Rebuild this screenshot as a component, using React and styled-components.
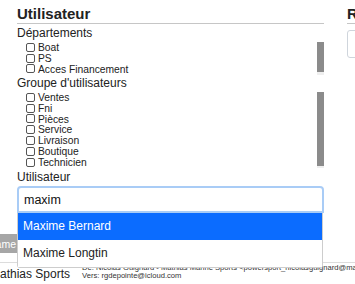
import React from "react";
import styled, { createGlobalStyle } from "styled-components";

const GlobalStyle = createGlobalStyle`
  html, body {
    margin: 0;
    overflow: hidden;
    background: #fff;
  }
  body {
    font-family: "Liberation Sans", Helvetica, Arial, sans-serif;
    color: #222;
  }
`;

const Page = styled.div`
  position: relative;
  width: 355px;
  height: 284px;
  overflow: hidden;
`;

const Columns = styled.div`
  display: grid;
  grid-template-columns: 307px 220px;
  column-gap: 23px;
  padding-left: 17px;
`;

const Column = styled.section`
  display: flex;
  flex-direction: column;
`;

const Heading = styled.h2`
  margin: 0;
  padding-top: 5px;
  font-size: 15px;
  line-height: 18px;
  font-weight: bold;
  color: #222;
  border-bottom: 1px solid #c6c6c6;
  white-space: nowrap;
`;

const Label = styled.div`
  margin-top: ${(p) => p.$gap || 2}px;
  font-size: 12px;
  line-height: 14px;
  white-space: nowrap;
`;

const ScrollBox = styled.div`
  display: flex;
  justify-content: space-between;
  margin-top: 2px;
  height: ${(p) => p.$height}px;
`;

const Items = styled.div`
  display: flex;
  flex-direction: column;
`;

const Item = styled.label`
  display: flex;
  align-items: center;
  gap: 3px;
  height: 10.8px;
  padding-left: 9px;
  font-size: 10.3px;
  line-height: 11px;
  white-space: nowrap;
`;

const Box = styled.span`
  width: 7px;
  height: 7px;
  border: 1px solid #555;
  border-radius: 2px;
  background: #fff;
`;

const Track = styled.div`
  width: 7px;
  background: #efefef;
  display: flex;
  flex-direction: column;
`;

const Thumb = styled.div`
  height: ${(p) => p.$size}px;
  background: #8b8b8b;
`;

const InputWrap = styled.div`
  position: relative;
  margin-top: 2px;
  z-index: 2;
`;

const Input = styled.input`
  display: block;
  box-sizing: border-box;
  width: 100%;
  height: 27px;
  margin: 0;
  padding: 0 5px;
  border: 2px solid #a9ccf6;
  border-radius: 4px 4px 0 0;
  font-family: inherit;
  font-size: 12.5px;
  color: #111;
  outline: none;
`;

const Dropdown = styled.ul`
  position: absolute;
  top: 100%;
  left: 0;
  right: 1px;
  margin: 0;
  padding: 0;
  list-style: none;
  background: #fff;
  border: 1px solid #cdcdcd;
  border-top: none;
  border-radius: 0 0 3px 3px;
`;

const Option = styled.li`
  height: 27px;
  line-height: 27px;
  padding-left: 5px;
  font-size: 12px;
  background: ${(p) => (p.$active ? "#0b6cff" : "#fff")};
  color: ${(p) => (p.$active ? "#fff" : "#222")};
`;

const SearchBox = styled.div`
  margin-top: 6px;
  height: 28px;
  box-sizing: border-box;
  border: 1px solid #cfd5dc;
  border-radius: 3px;
`;

const Toolbar = styled.div`
  display: flex;
  margin-top: 21px;
`;

const Button = styled.button`
  height: 19px;
  margin: 0 0 0 -13px;
  padding: 0 1px;
  border: none;
  background: #a6a6a6;
  color: #fff;
  font-family: inherit;
  font-size: 10.5px;
`;

const Footer = styled.div`
  display: flex;
  align-items: flex-start;
  margin-top: 9px;
  border-top: 1px solid #dcdcdc;
`;

const Sender = styled.div`
  margin: 4px 0 0 -10px;
  font-size: 12px;
  line-height: 14px;
  white-space: nowrap;
`;

const Meta = styled.div`
  margin-left: 12px;
  padding-top: 1px;
  font-size: 7.6px;
  line-height: 8px;
  color: #333;
  white-space: nowrap;
`;

const departements = ["Boat", "PS", "Acces Financement"];
const groupes = ["Ventes", "Fni", "Pièces", "Service", "Livraison", "Boutique", "Technicien"];

function CheckList({ items, height, thumb }) {
  return (
    <ScrollBox $height={height}>
      <Items>
        {items.map((name) => (
          <Item key={name}>
            <Box />
            {name}
          </Item>
        ))}
      </Items>
      <Track>
        <Thumb $size={thumb} />
      </Track>
    </ScrollBox>
  );
}

export default function App() {
  return (
    <Page>
      <GlobalStyle />
      <Columns>
        <Column>
          <Heading>Utilisateur</Heading>
          <Label>Départements</Label>
          <CheckList items={departements} height={33} thumb={30} />
          <Label $gap={1}>Groupe d'utilisateurs</Label>
          <CheckList items={groupes} height={76} thumb={74} />
          <Label>Utilisateur</Label>
          <InputWrap>
            <Input defaultValue="maxim" readOnly />
            <Dropdown>
              <Option $active>Maxime Bernard</Option>
              <Option>Maxime Longtin</Option>
            </Dropdown>
          </InputWrap>
        </Column>
        <Column>
          <Heading>Rôles</Heading>
          <SearchBox />
        </Column>
      </Columns>
      <Toolbar>
        <Button>Name</Button>
      </Toolbar>
      <Footer>
        <Sender>Mathias Sports</Sender>
        <Meta>
          <div>De: Nicolas Guignard - Mathias Marine Sports &lt;powersport_nicolasguignard@mathiassports.com&gt;</div>
          <div>Vers: rgdepointe@icloud.com</div>
        </Meta>
      </Footer>
    </Page>
  );
}
